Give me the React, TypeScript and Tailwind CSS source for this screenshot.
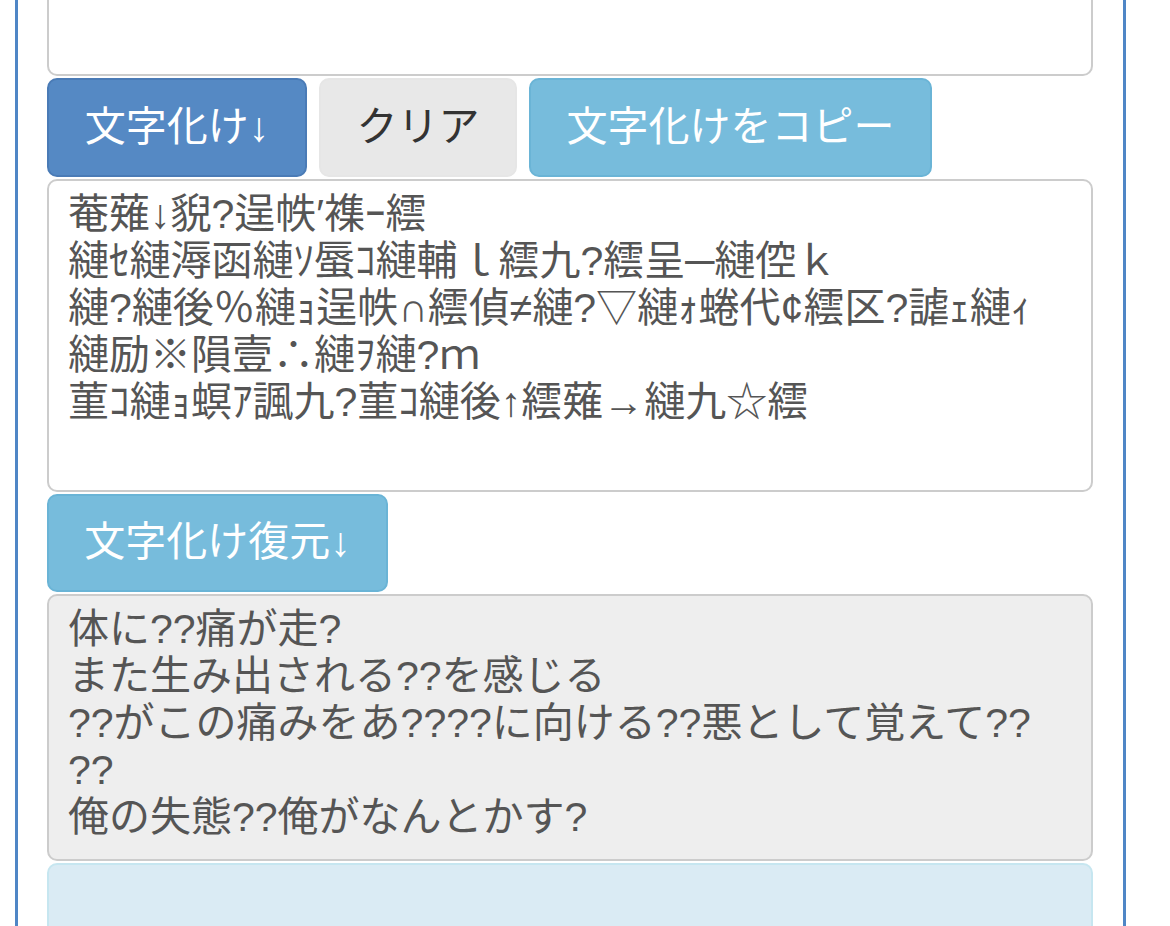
import React from 'react';

const garbled: string[] = [
  '菴薙↓貎?逞帙′襍ｰ繧',
  '縺ｾ縺溽函縺ｿ蜃ｺ縺輔ｌ繧九?繧呈─縺倥ｋ',
  '縺?縺後％縺ｮ逞帙∩繧偵≠縺?▽縺ｫ蜷代¢繧区?謔ｪ縺ｨ',
  '縺励※隕壹∴縺ｦ縺?ｍ',
  '菫ｺ縺ｮ螟ｱ諷九?菫ｺ縺後↑繧薙→縺九☆繧',
];

const restored: string[] = [
  '体に??痛が走?',
  'また生み出される??を感じる',
  '??がこの痛みをあ????に向ける??悪として覚えて??',
  '??',
  '俺の失態??俺がなんとかす?',
];

const font = { fontFamily: '"Liberation Sans", "Noto Sans CJK JP", sans-serif' };

export default function App() {
  return (
    <div className="h-[926px] overflow-hidden bg-white" style={font}>
      <div className="ml-[15px] h-full w-[1111px] border-x-[3px] border-[#4f86c6] pl-[29px] pr-[30px]">
        {/* source textarea, scrolled so only its bottom shows */}
        <div className="h-[76px] rounded-b-[10px] border-2 border-t-0 border-[#cccccc] bg-white" />

        {/* action buttons */}
        <div className="mt-[2px] flex gap-[12px]">
          <button className="flex h-[99px] w-[260px] items-center justify-center rounded-[10px] border-2 border-[#4a7bb6] bg-[#5589c4] text-[41px] text-white">
            文字化け↓
          </button>
          <button className="flex h-[99px] w-[198px] items-center justify-center rounded-[10px] border-2 border-[#e6e6e6] bg-[#e8e8e8] text-[41px] text-[#333333]">
            クリア
          </button>
          <button className="flex h-[99px] w-[403px] items-center justify-center rounded-[10px] border-2 border-[#6ab4d6] bg-[#77bcdc] text-[41px] text-white">
            文字化けをコピー
          </button>
        </div>

        {/* garbled output */}
        <div className="mt-[2px] h-[313px] overflow-hidden rounded-[10px] border-2 border-[#cccccc] bg-white px-[19px] pt-[10px] text-[41px] leading-[47px] text-[#555555]">
          {garbled.map((line, i) => (
            <div key={i} className="whitespace-pre">{line}</div>
          ))}
        </div>

        <button className="mt-[2px] flex h-[98px] w-[341px] items-center justify-center rounded-[10px] border-2 border-[#6ab4d6] bg-[#77bcdc] text-[41px] text-white">
          文字化け復元↓
        </button>

        {/* restored text */}
        <div className="mt-[2px] h-[267px] overflow-hidden rounded-[10px] border-2 border-[#cccccc] bg-[#eeeeee] px-[19px] pt-[10px] text-[41px] leading-[47px] text-[#555555]">
          {restored.map((line, i) => (
            <div key={i} className="whitespace-pre">{line}</div>
          ))}
        </div>

        {/* info panel */}
        <div className="mt-[2px] h-[120px] rounded-[10px] border-2 border-[#c6e6f0] bg-[#daebf4]" />
      </div>
    </div>
  );
}
